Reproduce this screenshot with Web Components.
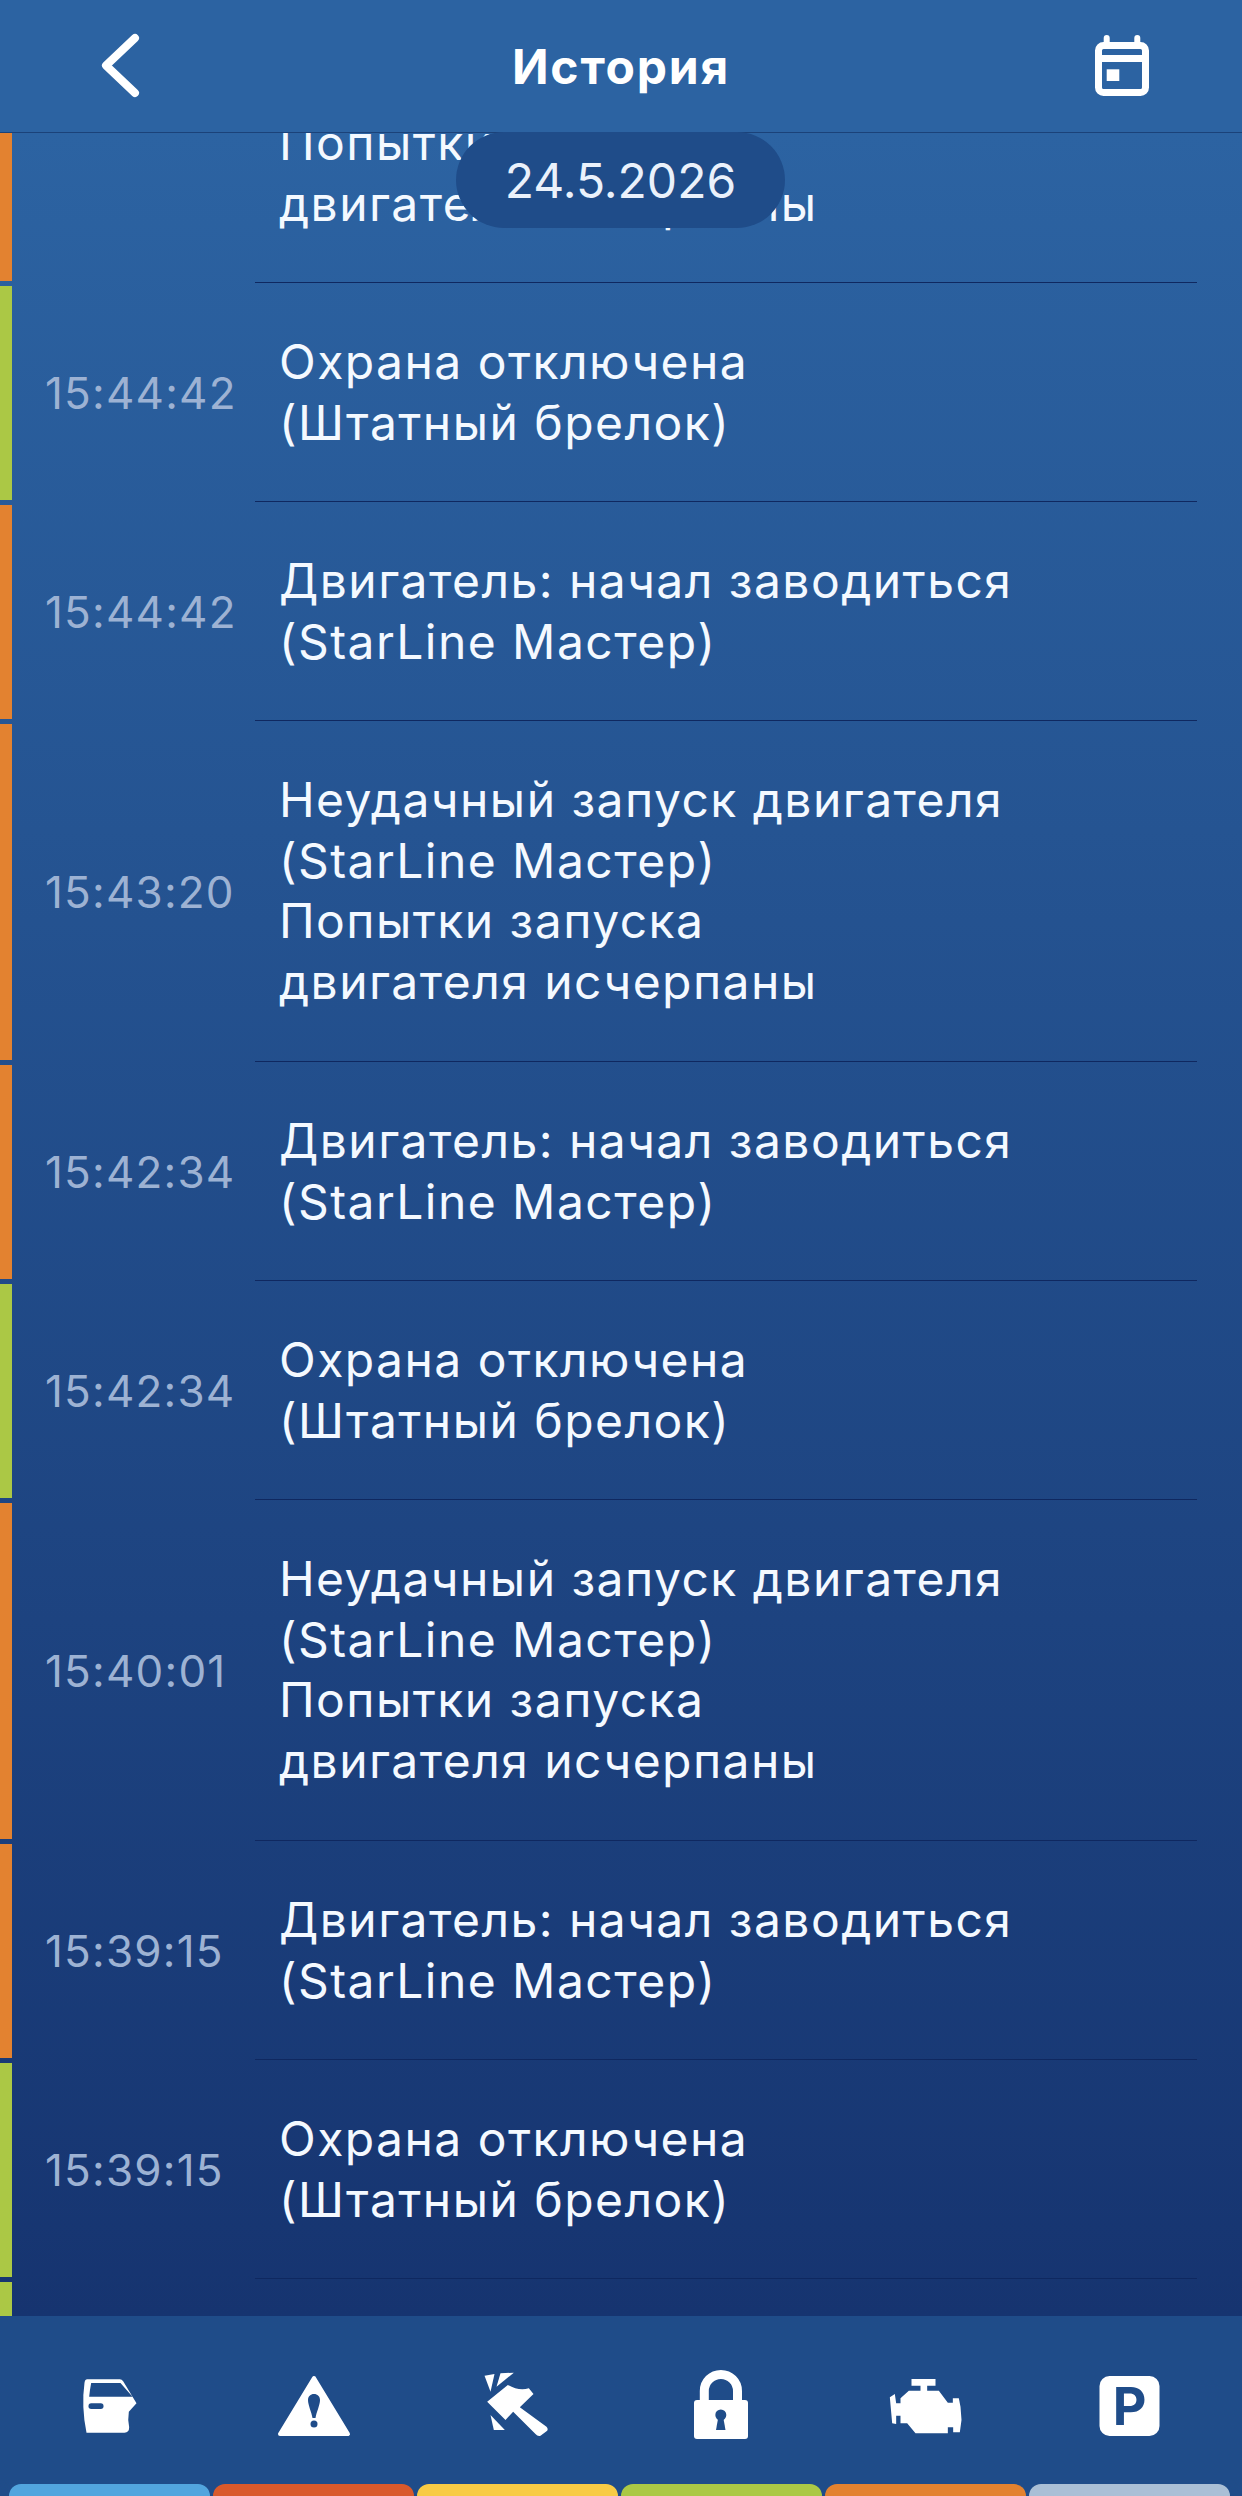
<!DOCTYPE html>
<html lang="ru">
<head>
<meta charset="utf-8">
<title>История</title>
<style>
    html, body { margin: 0; height: 100%; background: #1f4c89; }
    body { font-family: 'Inter', 'Liberation Sans', sans-serif; }
</style>
</head>
<body>
<history-screen>
    <app-header slot="header" title="История"></app-header>
    <date-pill slot="overlay">24.5.2026</date-pill>

    <!-- scrolled list: only the tail of the first row shows under the header -->
    <history-row kind="orange"><div>Попытки запуска</div><div>двигателя исчерпаны</div></history-row>
    <history-row kind="green" time="15:44:42"><div>Охрана отключена</div><div>(Штатный брелок)</div></history-row>
    <history-row kind="orange" time="15:44:42"><div>Двигатель: начал заводиться</div><div>(StarLine Мастер)</div></history-row>
    <history-row kind="orange" tall time="15:43:20"><div>Неудачный запуск двигателя</div><div>(StarLine Мастер)</div><div>Попытки запуска</div><div>двигателя исчерпаны</div></history-row>
    <history-row kind="orange" time="15:42:34"><div>Двигатель: начал заводиться</div><div>(StarLine Мастер)</div></history-row>
    <history-row kind="green" time="15:42:34"><div>Охрана отключена</div><div>(Штатный брелок)</div></history-row>
    <history-row kind="orange" tall time="15:40:01"><div>Неудачный запуск двигателя</div><div>(StarLine Мастер)</div><div>Попытки запуска</div><div>двигателя исчерпаны</div></history-row>
    <history-row kind="orange" time="15:39:15"><div>Двигатель: начал заводиться</div><div>(StarLine Мастер)</div></history-row>
    <history-row kind="green" time="15:39:15"><div>Охрана отключена</div><div>(Штатный брелок)</div></history-row>
    <history-row kind="green"></history-row>

    <tab-bar slot="footer">
        <tab-item color="#52a5de">
            <svg viewBox="0 0 270 270"><g transform="translate(-13.5 30)" fill="#fff" fill-rule="evenodd">
                <path d="M80 28H178Q184 28 188 34L228 100L205 125Q201 150 206 172Q206 188 192 188H78Q62 110 72 38Q74 28 80 28ZM92 39Q88 60 86 80H216L180 39Z"/>
                <rect x="84" y="100" width="45" height="17" rx="8" fill="#1f4c89"/>
            </g></svg>
        </tab-item>
        <tab-item color="#d9592b">
            <svg viewBox="0 0 90 90">
                <path d="M45 18L79 74H11Z" fill="#fff" stroke="#fff" stroke-width="4" stroke-linejoin="round"/>
                <path d="M45 34C48.500 34 51 36.500 51 40C51 45 47.500 52 46.500 58H43.500C42.500 52 39 45 39 40C39 36.500 41.500 34 45 34Z" fill="#1f4c89"/>
                <circle cx="45" cy="64" r="3.500" fill="#1f4c89"/>
            </svg>
        </tab-item>
        <tab-item color="#f8cb45">
            <svg viewBox="0 0 270 270"><g transform="translate(-67.500 30)" fill="#fff">
                <path d="M102 17L132 12L120 65Z"/>
                <path d="M150 10L190 8L138 50Z"/>
                <path d="M120 135L163 180H130Z"/>
                <path d="M110 95L172 45Q205 64 235 55L249 72L208 112L288 170Q295 178 288 184L270 197Q262 200 255 192L188 125L165 150Z"/>
            </g></svg>
        </tab-item>
        <tab-item color="#abc845">
            <svg viewBox="0 0 90 90">
                <path d="M27.300 42V31A16.600 16.600 0 0 1 60.500 31V42" fill="none" stroke="#fff" stroke-width="9"/>
                <rect x="17" y="40" width="54" height="39" rx="3" fill="#fff"/>
                <circle cx="43.800" cy="55" r="5.500" fill="#1f4c89"/>
                <path d="M41.500 56H46L48.500 70H39Z" fill="#1f4c89"/>
            </svg>
        </tab-item>
        <tab-item color="#e38230">
            <svg viewBox="0 0 270 270"><g transform="translate(-61.500 30)" fill="#fff">
                <path d="M88 82L103 72L107 100H120V85L145 62H180V47H153V27H225V47H200V62H235L262 98H277V85H295L300 110L303 150L298 187H278V172H262V190H165L140 160H120V137H107V162L95 160Z"/>
            </g></svg>
        </tab-item>
        <tab-item color="#aabfd6">
            <svg viewBox="0 0 90 90">
                <rect x="14.500" y="16" width="60" height="60" rx="10" fill="#fff"/>
                <text x="44.500" y="65" text-anchor="middle" font-family="Inter, 'Liberation Sans', sans-serif" font-weight="700" font-size="52" fill="#1f4c89">P</text>
            </svg>
        </tab-item>
    </tab-bar>
</history-screen>

<script>
class HistoryScreen extends HTMLElement {
    constructor() {
        super();
        this.attachShadow({ mode: 'open' });
        this.shadowRoot.innerHTML = `
<style>
    :host {
        display: flex;
        flex-direction: column;
        position: relative;
        width: 1242px;
        height: 2496px;
        overflow: hidden;
    }
    .list {
        flex: 1;
        min-height: 0;
        overflow: hidden;
        background: linear-gradient(to bottom, #2c63a2, #163470);
    }
    /* scroll position of the list */
    .rows { margin-top: -69px; }
    .overlay { position: absolute; top: 132px; left: 456px; }
</style>
<slot name="header"></slot>
<div class="list"><div class="rows"><slot></slot></div></div>
<slot name="footer"></slot>
<div class="overlay"><slot name="overlay"></slot></div>`;
    }
}

class AppHeader extends HTMLElement {
    constructor() {
        super();
        this.attachShadow({ mode: 'open' });
        this.shadowRoot.innerHTML = `
<style>
    :host {
        display: flex;
        flex: none;
        height: 132px;
        align-items: center;
        justify-content: space-between;
        background: #2c63a2;
        border-bottom: 1px solid #1b4279;
    }
    .title {
        color: #fff;
        font-weight: 700;
        font-size: 48px;
        letter-spacing: 1.8px;
    }
    svg { width: 132px; height: 132px; flex: none; }
    .back { margin-left: 55px; }
    .cal { margin-right: 55px; }
</style>
<svg class="back" viewBox="55 0 132 132"><path d="M135 38L106 65.500L135 93" fill="none" stroke="#fff" stroke-width="8" stroke-linecap="round" stroke-linejoin="round"/></svg>
<div class="title"></div>
<svg class="cal" viewBox="1055 0 132 132">
    <rect x="1098.500" y="45.500" width="47" height="47" rx="5" fill="none" stroke="#fff" stroke-width="7"/>
    <path d="M1098 58.500H1146" stroke="#fff" stroke-width="7"/>
    <path d="M1106.700 38V45M1137.300 38V45" stroke="#fff" stroke-width="6" stroke-linecap="round"/>
    <rect x="1106.700" y="69.300" width="12.600" height="11.700" fill="#fff"/>
</svg>`;
        this.shadowRoot.querySelector('.title').textContent = this.getAttribute('title');
    }
}

class DatePill extends HTMLElement {
    constructor() {
        super();
        this.attachShadow({ mode: 'open' });
        this.shadowRoot.innerHTML = `
<style>
    :host {
        display: flex;
        align-items: center;
        justify-content: center;
        box-sizing: border-box;
        width: 329px;
        height: 96px;
        border-radius: 48px;
        background: #1f4c89;
        color: #eaf1fb;
        font-size: 48px;
    }
</style>
<slot></slot>`;
    }
}

class HistoryRow extends HTMLElement {
    constructor() {
        super();
        this.attachShadow({ mode: 'open' });
        this.shadowRoot.innerHTML = `
<style>
    :host {
        display: flex;
        min-height: 219px;
    }
    :host([tall]) { min-height: 341px; }
    .bar {
        flex: none;
        width: 12px;
        margin: 3px 0 2px;
    }
    :host([kind="orange"]) .bar { background: #e38230; }
    :host([kind="green"]) .bar { background: #abc845; }
    .time {
        flex: none;
        box-sizing: border-box;
        width: 243px;
        padding-left: 33px;
        display: flex;
        align-items: center;
        color: #9db2d3;
        font-size: 44px;
        letter-spacing: 1.2px;
    }
    .body {
        flex: 1;
        margin-right: 45px;
        padding: 49px 0 0 24px;
        border-bottom: 1px solid #0f2860;
        color: #f4f9ff;
        font-size: 48px;
        line-height: 60.5px;
        letter-spacing: 1.45px;
    }
</style>
<div class="bar"></div>
<div class="time"></div>
<div class="body"><slot></slot></div>`;
        this.shadowRoot.querySelector('.time').textContent = this.getAttribute('time') || '';
    }
}

class TabBar extends HTMLElement {
    constructor() {
        super();
        this.attachShadow({ mode: 'open' });
        this.shadowRoot.innerHTML = `
<style>
    :host {
        display: grid;
        flex: none;
        grid-template-columns: repeat(6, 201px);
        column-gap: 3px;
        height: 180px;
        padding: 0 0 0 9px;
        background: #1f4c89;
    }
</style>
<slot></slot>`;
    }
}

class TabItem extends HTMLElement {
    constructor() {
        super();
        this.attachShadow({ mode: 'open' });
        this.shadowRoot.innerHTML = `
<style>
    :host {
        display: flex;
        flex-direction: column;
        align-items: center;
    }
    .icon {
        flex: 1;
        padding-top: 44px;
    }
    ::slotted(svg) { display: block; width: 90px; height: 90px; }
    .strip {
        flex: none;
        align-self: stretch;
        height: 12px;
        border-radius: 12px 12px 0 0;
        background: var(--strip);
    }
</style>
<div class="icon"><slot></slot></div>
<div class="strip"></div>`;
        this.style.setProperty('--strip', this.getAttribute('color'));
    }
}

customElements.define('history-screen', HistoryScreen);
customElements.define('app-header', AppHeader);
customElements.define('date-pill', DatePill);
customElements.define('history-row', HistoryRow);
customElements.define('tab-bar', TabBar);
customElements.define('tab-item', TabItem);
</script>
</body>
</html>
